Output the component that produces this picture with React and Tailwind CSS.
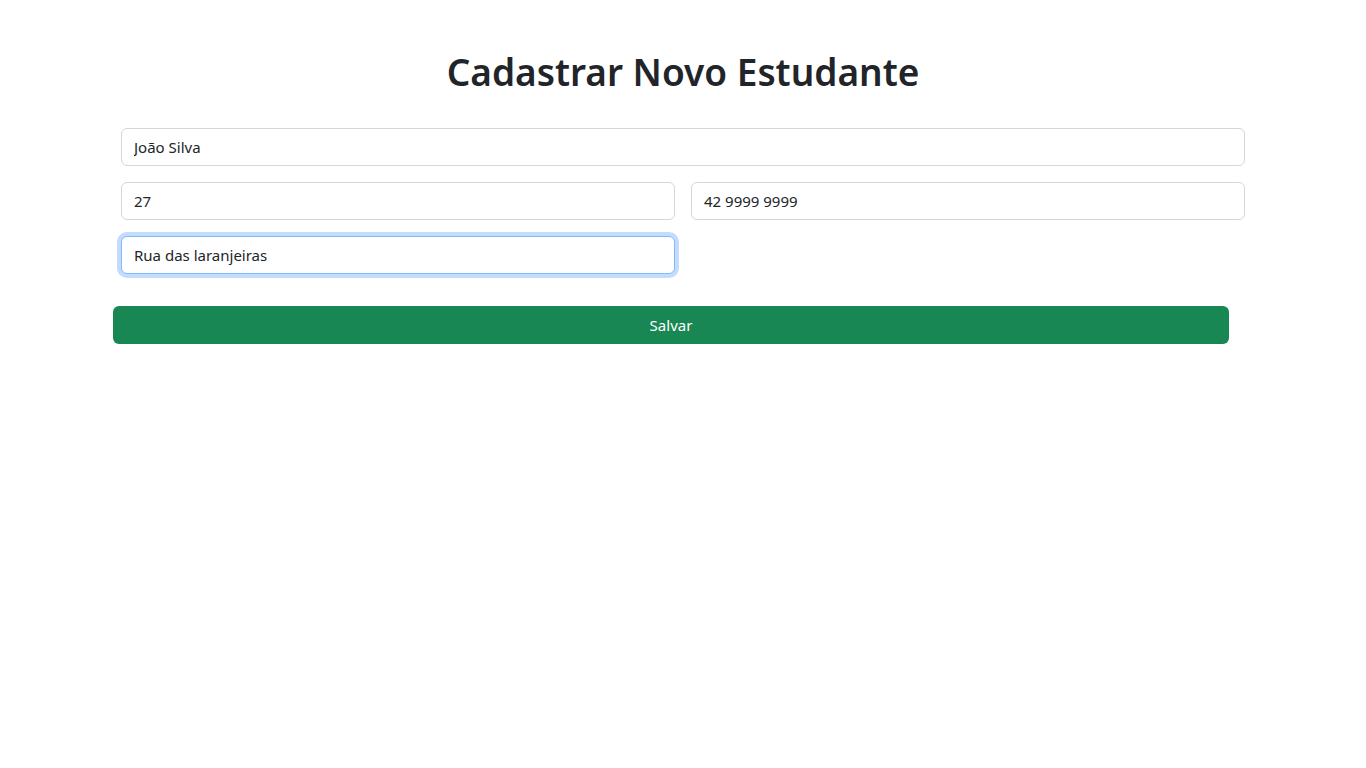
import React, { useState } from "react";

const inputBase =
  "w-full h-[38px] px-3 rounded-[6px] border bg-white text-[15px] text-[#212529] outline-none";

const App = () => {
  const [form, setForm] = useState({
    nome: "João Silva",
    idade: "27",
    telefone: "42 9999 9999",
    endereco: "Rua das laranjeiras",
  });

  const update = (key) => (e) => setForm({ ...form, [key]: e.target.value });

  return (
    <div
      className="min-h-screen bg-white text-[#212529]"
      style={{ fontFamily: '"Noto Sans", "Open Sans", sans-serif' }}
    >
      <div className="w-[1140px] mx-auto pt-[48px]">
        {/* Title */}
        <h1 className="text-center text-[37px] leading-[48px] font-semibold text-[#212529] mb-[32px]">
          Cadastrar Novo Estudante
        </h1>

        {/* Form */}
        <form onSubmit={(e) => e.preventDefault()}>
          <div className="px-2 flex flex-col gap-4">
            <input
              className={`${inputBase} border-[#d3d6da]`}
              value={form.nome}
              onChange={update("nome")}
            />
            <div className="grid grid-cols-2 gap-4">
              <input
                className={`${inputBase} border-[#d3d6da]`}
                value={form.idade}
                onChange={update("idade")}
              />
              <input
                className={`${inputBase} border-[#d3d6da]`}
                value={form.telefone}
                onChange={update("telefone")}
              />
            </div>
            <div className="grid grid-cols-2 gap-4">
              <input
                className={`${inputBase} border-[#86b7fe] shadow-[0_0_0_4px_rgba(13,110,253,0.25)]`}
                value={form.endereco}
                onChange={update("endereco")}
              />
            </div>
          </div>

          <button
            type="submit"
            className="mt-8 w-[1116px] h-[38px] rounded-[6px] bg-[#198754] text-white text-[15px]"
          >
            Salvar
          </button>
        </form>
      </div>
    </div>
  );
};

export default App;
